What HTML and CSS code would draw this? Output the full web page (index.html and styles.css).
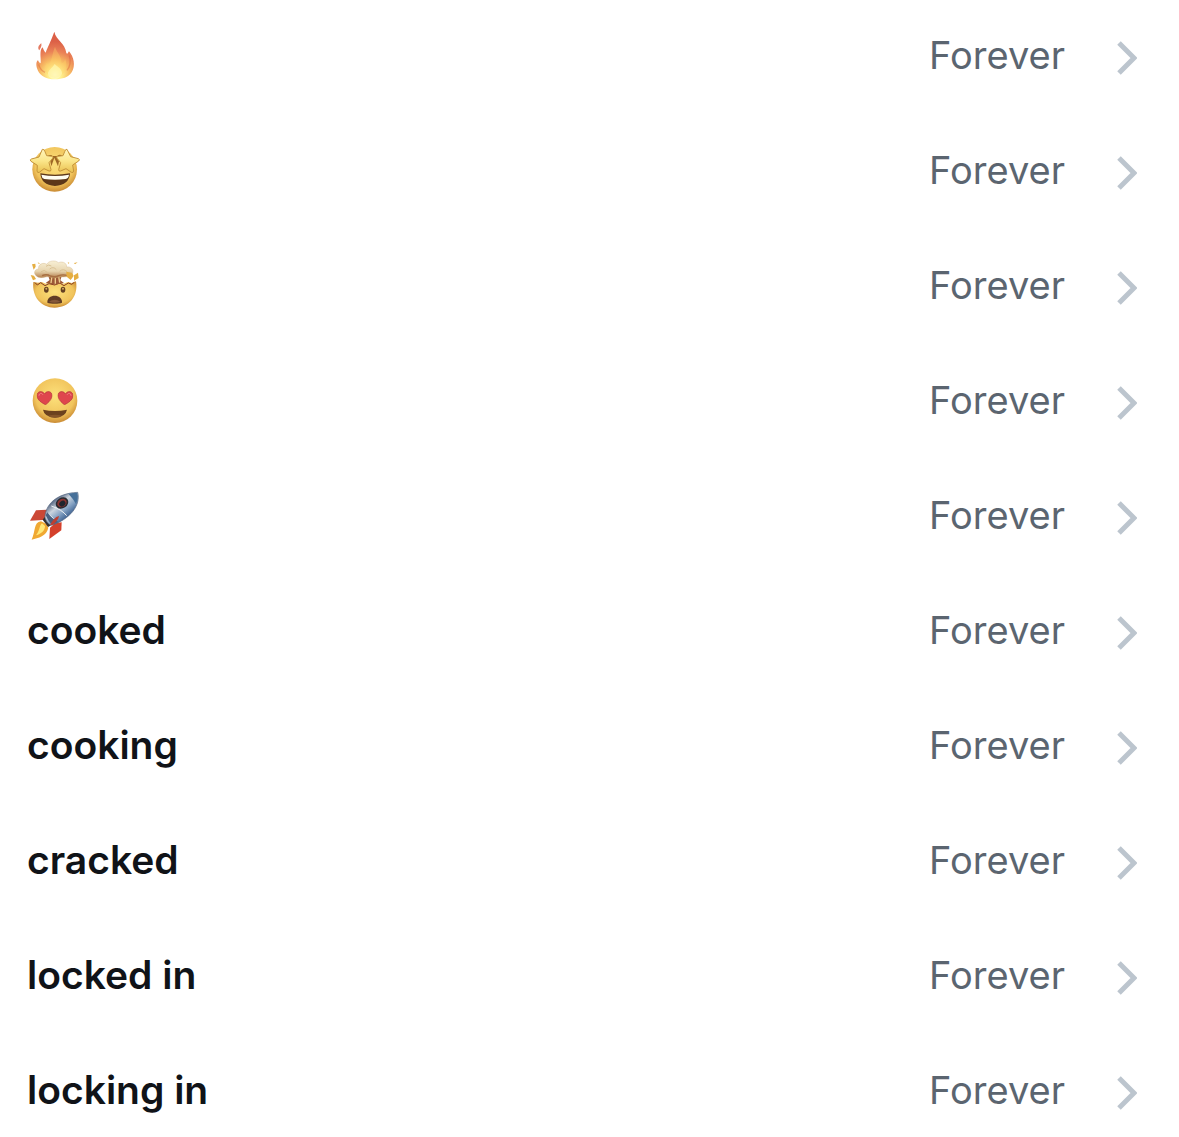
FILE: index.html
```
<!DOCTYPE html>
<html lang="en">
<head>
    <meta charset="UTF-8">
    <meta name="viewport" content="width=device-width, initial-scale=1">
    <title>Muted words</title>
    <link rel="stylesheet" href="styles.css">
</head>
<body>
    <!-- shared gradients and the chevron -->
    <svg class="defs" width="0" height="0" aria-hidden="true">
        <defs>
            <radialGradient id="face" cx="50%" cy="40%" r="62%">
                <stop offset="0" stop-color="#fce17c"/>
                <stop offset="0.7" stop-color="#f1c45c"/>
                <stop offset="1" stop-color="#c5842f"/>
            </radialGradient>
            <radialGradient id="flame" gradientUnits="userSpaceOnUse" cx="105" cy="164" r="100">
                <stop offset="0" stop-color="#ffffdc"/>
                <stop offset="0.2" stop-color="#fff08c"/>
                <stop offset="0.45" stop-color="#f7b962"/>
                <stop offset="0.7" stop-color="#ea8257"/>
                <stop offset="1" stop-color="#dc6047"/>
            </radialGradient>
            <linearGradient id="star" x1="0" y1="0" x2="0" y2="1">
                <stop offset="0" stop-color="#fff5bd"/>
                <stop offset="0.5" stop-color="#fbe68a"/>
                <stop offset="1" stop-color="#e9c04f"/>
            </linearGradient>
            <linearGradient id="cloud" x1="0" y1="0" x2="0" y2="1">
                <stop offset="0" stop-color="#f8f0d6"/>
                <stop offset="0.6" stop-color="#e7d4ae"/>
                <stop offset="1" stop-color="#b37c4a"/>
            </linearGradient>
            <linearGradient id="hull" gradientUnits="userSpaceOnUse" x1="104" y1="62" x2="146" y2="112">
                <stop offset="0" stop-color="#65748d"/>
                <stop offset="0.3" stop-color="#ccd5df"/>
                <stop offset="0.65" stop-color="#819fc1"/>
                <stop offset="1" stop-color="#365a8b"/>
            </linearGradient>
        </defs>
        <symbol id="chevron" viewBox="0 0 20 40">
            <path d="M2 8l15 15L2 38" fill="none" stroke="#bcc5ce" stroke-width="5"/>
        </symbol>
        <symbol id="heart" viewBox="0 0 48 44">
            <path d="M27 43C16 39 1 28 1 16C1 3 16 -1 24 11C29 0 46 2 46 15C46 27 36 36 27 43z" fill="#df464d" stroke="#b33b3d" stroke-width="2"/>
            <path d="M7 15C8 8 15 7 18 12" fill="none" stroke="#f28387" stroke-width="3" stroke-linecap="round"/>
        </symbol>
    </svg>

    <ul class="word-list">
        <li>
            <a class="word-row" href="#">
                <svg class="emoji" viewBox="21 21 168 168" role="img" aria-label="Fire">
                    <path d="M103 35C108 61 135 67 139 99C143 105 145 96 147 94C161 110 168 137 155 157C145 172 127 178 105 178C79 178 62 168 54 152C47 138 48 124 54 121C56 125 58 129 62 130C64 117 57 94 67 82C71 86 71 94 77 98C83 80 92 66 103 35z" fill="url(#flame)"/>
                    <path d="M64 70C66 80 61 85 58 91C52 85 55 76 64 70z" fill="#e47a61"/>
                    <path d="M105 80C110 98 126 108 124 130C132 129 134 121 135 116C146 138 135 169 105 174C78 169 69 148 80 128C85 135 89 131 92 124C98 107 99 94 105 80z" fill="#ffd566" opacity="0.35"/>
                    <path d="M104 132C114 142 127 147 126 161C122 172 112 176 104 177C91 176 83 168 84 158C87 148 97 143 104 132z" fill="#fffcbd" opacity="0.6"/>
                    <path d="M56 133C59 145 67 153 75 157M148 106C153 125 150 140 141 151" fill="none" stroke="#d95b39" stroke-width="4" opacity="0.4"/>
                </svg>
                <span class="duration">Forever</span>
                <svg class="chevron" aria-hidden="true"><use href="#chevron"/></svg>
            </a>
        </li>
        <li>
            <a class="word-row" href="#">
                <svg class="emoji" viewBox="21 21 168 168" role="img" aria-label="Star-struck">
                    <circle cx="104" cy="103" r="67" fill="url(#face)"/>
                    <path d="M61 115Q104 123 150 115Q148 150 105 153Q63 150 61 115z" fill="#5c3719"/>
                    <path d="M64 119Q105 127 147 119Q146 130 137 132Q105 137 73 132Q65 129 64 119z" fill="#fffdf1"/>
                    <path d="M82 63Q92 56 99 64L91 79L94 94L103 68L114 94L117 79L110 64Q117 56 128 62" fill="#9e6825"/>
                    <g fill="url(#star)" stroke="#c4933a" stroke-width="3" stroke-linejoin="round">
                        <path d="M67 43Q72 41 75 50L80 62L96 64Q102 66 97 71L87 83L93 104Q93 110 87 108L72 101L58 112Q52 115 51 108L52 91L33 79Q28 74 34 72L57 66z"/>
                        <path d="M141 43Q137 41 134 50L129 62L114 64Q107 66 112 71L122 83L116 104Q116 110 122 108L138 101L154 112Q160 115 161 108L158 90L176 78Q181 73 175 71L152 65z"/>
                    </g>
                </svg>
                <span class="duration">Forever</span>
                <svg class="chevron" aria-hidden="true"><use href="#chevron"/></svg>
            </a>
        </li>
        <li>
            <a class="word-row" href="#">
                <svg class="emoji" viewBox="21 21 168 168" role="img" aria-label="Exploding head">
                    <path d="M40 96L54 98L65 96L78 101L91 97L104 101L117 97L130 101L144 96L155 99L168 94C176 142 145 173 104 173C64 173 35 141 40 96z" fill="url(#face)"/>
                    <path d="M45 98L52 105L62 98L75 107L87 101L104 105L119 99L132 107L145 99L155 103L163 97" fill="none" stroke="#873e24" stroke-width="3"/>
                    <path d="M84 76L126 76L121 91L132 99L105 104L77 99L89 90z" fill="#9d5936"/>
                    <path d="M96 78L93 99M106 78V101M116 79L119 98" stroke="#efcf8f" stroke-width="4"/>
                    <path d="M49 78C39 69 44 57 56 57C53 42 71 36 80 43C86 31 107 30 115 38C130 32 141 41 140 51C157 48 166 66 152 75C139 85 123 78 111 83C96 87 88 77 77 81C66 84 55 84 49 78z" fill="url(#cloud)" stroke="#cba978" stroke-width="1"/>
                    <path d="M63 65Q73 57 82 67M89 57Q100 48 109 59M119 64Q130 54 141 65M78 49Q86 42 94 48" fill="none" stroke="#d9c094" stroke-width="3"/>
                    <path d="M66 77Q80 71 91 78Q105 83 116 77Q129 72 143 77" fill="none" stroke="#a76f42" stroke-width="4"/>
                    <path d="M36 43L46 41L47 50L41 59zM53 37L59 40L57 43zM143 37L148 38L146 42zM162 39L173 37L165 43zM139 65L157 69L161 78L152 90L140 80zM162 76L174 68L176 84L162 92zM32 75L42 77L48 87L39 91z" fill="#e5ae42"/>
                    <ellipse cx="79" cy="119" rx="7" ry="9" fill="#654022"/>
                    <ellipse cx="129" cy="119" rx="7" ry="9" fill="#654022"/>
                    <circle cx="79" cy="116" r="3" fill="#d3a860"/>
                    <circle cx="129" cy="116" r="3" fill="#d3a860"/>
                    <path d="M82 158C80 130 128 130 126 158C118 162 91 162 82 158z" fill="#613d25"/>
                    <path d="M87 155Q104 143 121 155Q104 161 87 155z" fill="#85583a"/>
                </svg>
                <span class="duration">Forever</span>
                <svg class="chevron" aria-hidden="true"><use href="#chevron"/></svg>
            </a>
        </li>
        <li>
            <a class="word-row" href="#">
                <svg class="emoji" viewBox="21 21 168 168" role="img" aria-label="Heart eyes">
                    <circle cx="105" cy="107" r="67" fill="url(#face)"/>
                    <path d="M69 134Q105 142 141 134Q137 156 105 158Q73 156 69 134z" fill="#6c421e"/>
                    <path d="M84 152Q105 146 127 152Q119 158 105 158Q91 158 84 152z" fill="#855529"/>
                    <use href="#heart" x="50" y="76" width="48" height="44"/>
                    <use href="#heart" x="-160" y="76" width="48" height="44" transform="scale(-1 1)"/>
                </svg>
                <span class="duration">Forever</span>
                <svg class="chevron" aria-hidden="true"><use href="#chevron"/></svg>
            </a>
        </li>
        <li>
            <a class="word-row" href="#">
                <svg class="emoji" viewBox="21 21 168 168" role="img" aria-label="Rocket">
                    <path d="M80 89L48 91L30 122L69 120L85 103z" fill="#cb4835"/>
                    <path d="M125 127L124 151L88 177L90 143L105 130z" fill="#d4402b"/>
                    <path d="M63 124C40 128 48 151 35 179C55 174 80 168 85 143L78 131z" fill="#f0a832"/>
                    <path d="M66 130C57 138 60 151 48 166C65 161 75 151 75 138z" fill="#ffe878"/>
                    <path d="M68 119L84 141L93 136L74 111z" fill="#34312f"/>
                    <path d="M75 111C76 77 106 40 173 37C183 76 150 118 94 136C86 134 77 123 75 111z" fill="url(#hull)" stroke="#52647e" stroke-width="2"/>
                    <path d="M145 41Q160 38 172 38Q176 55 168 72Q158 54 145 41z" fill="#467099"/>
                    <path d="M84 101Q102 113 108 129M94 78Q126 89 140 107" fill="none" stroke="#eef1f3" stroke-width="3"/>
                    <path d="M77 106Q85 124 96 135L116 126Q97 119 82 97z" fill="#4b6180"/>
                    <ellipse cx="126" cy="69" rx="20" ry="16" transform="rotate(-35 126 69)" fill="#282b31"/>
                    <ellipse cx="126" cy="69" rx="15" ry="12" transform="rotate(-35 126 69)" fill="#8b3431"/>
                    <ellipse cx="127" cy="71" rx="10" ry="8" transform="rotate(-35 127 71)" fill="#20252d"/>
                    <path d="M117 108C107 110 96 122 90 136L99 134C108 126 116 118 117 108z" fill="#bd3f31"/>
                </svg>
                <span class="duration">Forever</span>
                <svg class="chevron" aria-hidden="true"><use href="#chevron"/></svg>
            </a>
        </li>
        <li>
            <a class="word-row" href="#">
                <span class="word">cooked</span>
                <span class="duration">Forever</span>
                <svg class="chevron" aria-hidden="true"><use href="#chevron"/></svg>
            </a>
        </li>
        <li>
            <a class="word-row" href="#">
                <span class="word">cooking</span>
                <span class="duration">Forever</span>
                <svg class="chevron" aria-hidden="true"><use href="#chevron"/></svg>
            </a>
        </li>
        <li>
            <a class="word-row" href="#">
                <span class="word">cracked</span>
                <span class="duration">Forever</span>
                <svg class="chevron" aria-hidden="true"><use href="#chevron"/></svg>
            </a>
        </li>
        <li>
            <a class="word-row" href="#">
                <span class="word">locked in</span>
                <span class="duration">Forever</span>
                <svg class="chevron" aria-hidden="true"><use href="#chevron"/></svg>
            </a>
        </li>
        <li>
            <a class="word-row" href="#">
                <span class="word">locking in</span>
                <span class="duration">Forever</span>
                <svg class="chevron" aria-hidden="true"><use href="#chevron"/></svg>
            </a>
        </li>
    </ul>
</body>
</html>
```

FILE: styles.css
```
body {
    margin: 0;
    background: #fff;
    color: #101318;
    font-family: Inter, "Liberation Sans", sans-serif;
    font-size: 38px;
    line-height: 70px;
}
.defs {
    display: block;
}
.word-list {
    display: flex;
    flex-direction: column;
    gap: 45px;
    margin: 0;
    padding: 20px 42px 12px 27px;
    list-style: none;
}
.word-row {
    display: flex;
    align-items: center;
    color: inherit;
    text-decoration: none;
}
.word {
    font-size: 39px;
    font-weight: 600;
}
.emoji {
    width: 56px;
    height: 56px;
}
.duration {
    margin-left: auto;
    color: #5b6570;
}
.chevron {
    width: 20px;
    height: 40px;
    margin-left: 52px;
}
```
